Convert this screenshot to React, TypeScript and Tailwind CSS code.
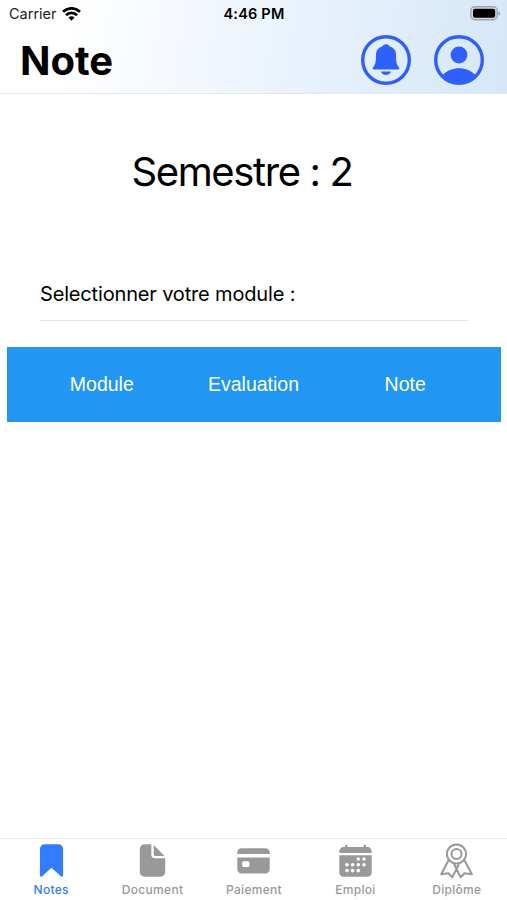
import { IoBookmark, IoDocument } from 'react-icons/io5';

const columns = ['Module', 'Evaluation', 'Note'];

const tabs = [
  { label: 'Notes', icon: IoBookmark, active: true },
  { label: 'Document', icon: IoDocument, active: false },
  { label: 'Paiement', icon: CardIcon, active: false },
  { label: 'Emploi', icon: CalendarIcon, active: false },
  { label: 'Diplôme', icon: RibbonIcon, active: false },
];

const calendarDots = [
  [21.3, 17],
  [27, 17],
  [10, 22.7],
  [15.6, 22.7],
  [21.3, 22.7],
  [27, 22.7],
  [10, 28.6],
  [15.6, 28.6],
  [21.3, 28.6],
];

function CardIcon({ className }: { className?: string }) {
  return (
    <svg className={className} viewBox="0 0 37 37" fill="currentColor">
      <path d="M2.3 12v-1.500a4.200 4.200 0 0 1 4.200-4.200h24a4.200 4.200 0 0 1 4.200 4.200V12z" />
      <path
        fillRule="evenodd"
        d="M2.300 15.500h32.400v11.800a4.200 4.200 0 0 1-4.200 4.200h-24a4.200 4.200 0 0 1-4.200-4.200zM8.700 19.300a1.500 1.500 0 0 0-1.500 1.500v2.800a1.500 1.500 0 0 0 1.500 1.500h4.200a1.500 1.500 0 0 0 1.500-1.500v-2.800a1.500 1.500 0 0 0-1.500-1.500z"
      />
    </svg>
  );
}

function CalendarIcon({ className }: { className?: string }) {
  return (
    <svg className={className} viewBox="0 0 37 37" fill="currentColor">
      <rect x="8" y="2.700" width="2.400" height="4" rx="1" />
      <rect x="26.600" y="2.700" width="2.400" height="4" rx="1" />
      <path d="M2.300 11V9.300a4.300 4.300 0 0 1 4.300-4.300h23.800a4.300 4.300 0 0 1 4.300 4.300V11z" />
      <path d="M2.300 13.300h32.400v17.200a4.300 4.300 0 0 1-4.300 4.300H6.600a4.300 4.300 0 0 1-4.300-4.300z" />
      {calendarDots.map(([x, y]) => (
        <circle key={`${x}-${y}`} cx={x} cy={y} r="1.8" fill="white" />
      ))}
    </svg>
  );
}

function RibbonIcon({ className }: { className?: string }) {
  return (
    <svg className={className} viewBox="0 0 37 37" fill="none" stroke="currentColor" strokeWidth="2" strokeLinejoin="round">
      <circle cx="18.500" cy="12" r="9.600" />
      <circle cx="18.500" cy="12" r="5" />
      <path d="M10.500 18.200 3.200 32.300l7.300-1 3.800 4L18.500 27l4.200 8.300 3.800-4 7.300 1-7.300-14.100M18.500 27l-2.400-5M18.500 27l2.400-5" />
    </svg>
  );
}

function WifiIcon() {
  return (
    <svg className="w-[19px] h-[14px]" viewBox="0 0 19 14" fill="none" stroke="black" strokeWidth="2.8">
      <path d="M1 4.800a12.200 12.200 0 0 1 17 0" />
      <path d="M4 8.200a7.900 7.900 0 0 1 11 0" />
      <path d="M6.500 10.600a4 4 0 0 1 6 0L9.500 13.700z" fill="black" stroke="none" />
    </svg>
  );
}

function BatteryIcon() {
  return (
    <svg className="w-[31px] h-[15px]" viewBox="0 0 31 15">
      <rect x="0.8" y="0.8" width="26.4" height="13" rx="4" fill="#d5dbe2" stroke="#a0a5ab" strokeWidth="1.4" />
      <rect x="3" y="2.8" width="22.2" height="9" rx="2" fill="black" />
      <path d="M28.5 5.2c2.2.8 2.2 3.6 0 4.4z" fill="#9a9fa5" />
    </svg>
  );
}

function BellCircle() {
  return (
    <svg className="size-[50px]" viewBox="0 0 50 50" fill="#3060fb">
      <circle cx="25" cy="25" r="23.3" fill="none" stroke="#3060fb" strokeWidth="3.4" />
      <path d="M25 9.300c-2 0-3.300 1-3.800 2.300-4.300 1.300-6.200 4.300-6.200 8.700 0 6.400-.500 9.200-2.900 12-.900 1-.400 2.200.900 2.200h24c1.300 0 1.800-1.200.900-2.200-2.400-2.800-2.900-5.600-2.900-12 0-4.400-1.900-7.400-6.200-8.700-.500-1.300-1.800-2.300-3.800-2.300z" />
      <path d="M20 36.500h10c-.500 2.100-2.500 3.400-5 3.400s-4.500-1.300-5-3.400z" />
    </svg>
  );
}

function UserCircle() {
  return (
    <svg className="size-[50px]" viewBox="0 0 50 50" fill="#3060fb">
      <circle cx="25" cy="25" r="23.3" fill="none" stroke="#3060fb" strokeWidth="3.4" />
      <circle cx="25" cy="20" r="8.4" />
      <path d="M9 39.500C13 35.500 18.500 33.200 25 33.200s12 2.300 16 6.300C37 45 31.500 48.200 25 48.200S13 45 9 39.500z" />
    </svg>
  );
}

export default function App() {
  return (
    <div className="flex h-[900px] w-[507px] flex-col overflow-hidden bg-white font-['Inter',sans-serif] text-black">
      {/* Header */}
      <header className="h-[94px] border-b border-[#e6e8eb] bg-[linear-gradient(100deg,#ffffff_14%,#ecf4fd_52%,#d5e7f8_100%)]">
        <div className="grid h-[27px] grid-cols-3 items-center pl-[9px] pr-[6px]">
          <div className="flex items-center gap-[5px] text-[14.5px] text-[#222]">
            <span>Carrier</span>
            <WifiIcon />
          </div>
          <span className="pr-[2px] text-center text-[14.5px] font-semibold tracking-[0.2px]">4:46 PM</span>
          <div className="flex justify-end">
            <BatteryIcon />
          </div>
        </div>
        <div className="flex h-[66px] items-center justify-between pl-[20px] pr-[23px]">
          <h1 className="pt-[2px] text-[40px] font-bold leading-none">Note</h1>
          <div className="flex items-center gap-[23px]">
            <BellCircle />
            <UserCircle />
          </div>
        </div>
      </header>

      {/* Module selection */}
      <main className="flex-1">
        <h2 className="mt-[53px] pr-[23px] text-center text-[40px] leading-[50px] tracking-[-1.4px]">Semestre : 2</h2>
        <div className="ml-[40px] mr-[39px] mt-[82px] h-[42px] border-b border-[#e4e4e4] text-[20px] leading-[30px] tracking-[-0.16px]">
          Selectionner votre module :
        </div>
        <div className="ml-[7px] mr-[6px] mt-[26px] grid h-[75px] grid-cols-3 items-center bg-[#2196f3] pl-[19px] pr-[20px] pt-px text-center font-['Liberation_Sans',sans-serif] text-[19.5px] text-white">
          {columns.map((column) => (
            <span key={column}>{column}</span>
          ))}
        </div>
      </main>

      {/* Tab bar */}
      <nav className="grid h-[62px] grid-cols-5 border-t border-[#ececec]">
        {tabs.map(({ label, icon: Icon, active }) => (
          <div
            key={label}
            className={`flex flex-col items-center gap-[2px] pl-px pt-[3px] ${active ? 'text-[#347cff]' : 'text-[#999999]'}`}
          >
            <Icon className="size-[37px]" />
            <span className="text-[12px] font-medium leading-[17px] tracking-[0.3px]">{label}</span>
          </div>
        ))}
      </nav>
    </div>
  );
}
